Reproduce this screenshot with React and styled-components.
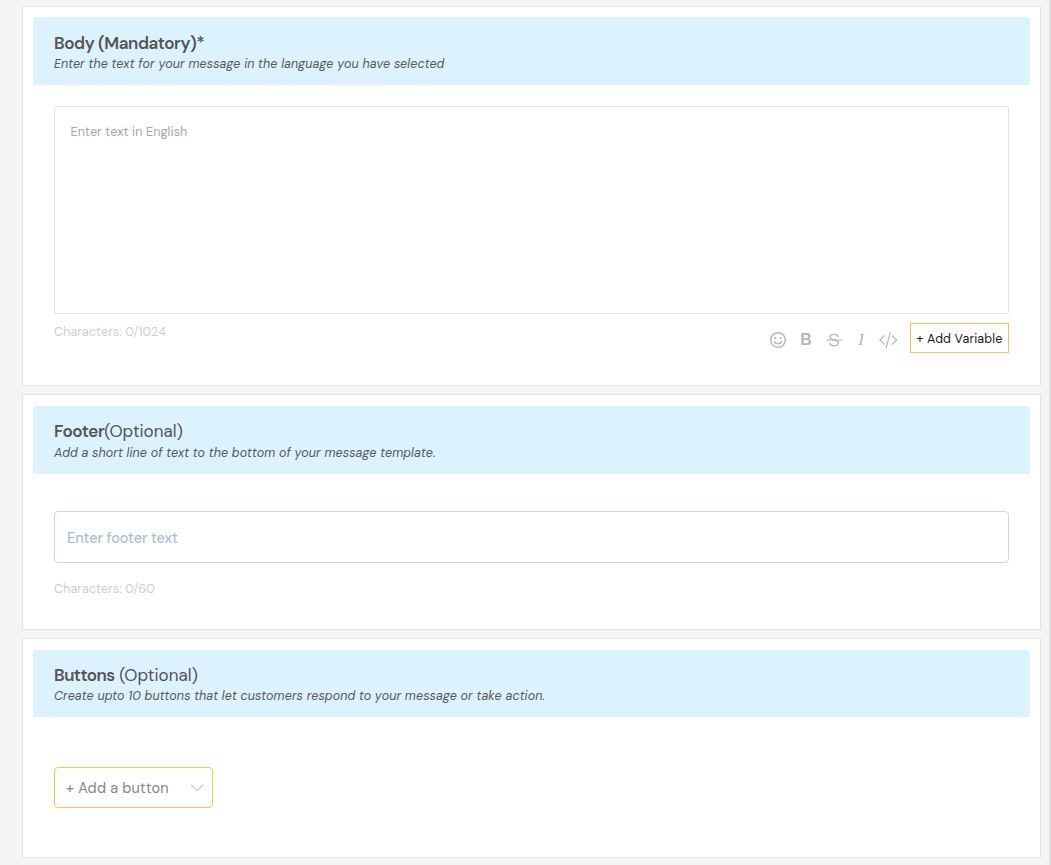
import styled, { createGlobalStyle } from "styled-components";

function App() {
  return (
    <>
      <GlobalStyle />
      <Page>
        <Card $height={380}>
          <CardHeader>
            <Title>
              <Strong $spacing={-0.42}>Body (Mandatory)*</Strong>
            </Title>
            <Subtitle>
              Enter the text for your message in the language you have selected
            </Subtitle>
          </CardHeader>
          <BodyContent>
            <TextArea placeholder="Enter text in English" />
            <BodyTools>
              <Counter>Characters: 0/1024</Counter>
              <Toolbar>
                <SmileIcon />
                <Glyph $bold>B</Glyph>
                <StrikeIcon />
                <Glyph>I</Glyph>
                <CodeIcon />
                <VariableButton>+ Add Variable</VariableButton>
              </Toolbar>
            </BodyTools>
          </BodyContent>
        </Card>

        <Card $height={236} $top={11}>
          <CardHeader $top={14}>
            <Title $gap={1}>
              <Strong $spacing={-0.45}>Footer</Strong>
              <span>(Optional)</span>
            </Title>
            <Subtitle>
              Add a short line of text to the bottom of your message template.
            </Subtitle>
          </CardHeader>
          <FooterContent>
            <FooterInput placeholder="Enter footer text" />
            <Counter>Characters: 0/60</Counter>
          </FooterContent>
        </Card>

        <Card $height={220} $top={11}>
          <CardHeader $height={67} $top={14}>
            <Title>
              <Strong $spacing={-0.55}>Buttons</Strong> <span>(Optional)</span>
            </Title>
            <Subtitle>
              Create upto 10 buttons that let customers respond to your message
              or take action.
            </Subtitle>
          </CardHeader>
          <ButtonsContent>
            <AddButton>
              <span>+ Add a button</span>
              <ChevronIcon />
            </AddButton>
          </ButtonsContent>
        </Card>
      </Page>
    </>
  );
}

export default App;

function SmileIcon() {
  return (
    <svg width="18" height="18" viewBox="0 0 18 18" fill="none">
      <circle cx="9" cy="9" r="7.3" stroke="#b5b8b9" strokeWidth="1.5" />
      <circle cx="6.3" cy="7.1" r="1.1" fill="#b5b8b9" />
      <circle cx="11.7" cy="7.1" r="1.1" fill="#b5b8b9" />
      <path
        d="M5.2 10.6c1.5 2.9 6.1 2.9 7.6 0"
        stroke="#b5b8b9"
        strokeWidth="1.4"
        strokeLinecap="round"
      />
    </svg>
  );
}

function StrikeIcon() {
  return (
    <svg width="18" height="18" viewBox="0 0 18 18" fill="none">
      <path d="M1 9h16" stroke="#b5b8b9" strokeWidth="1.1" />
      <path
        d="M13 6C12.800 4.300 11.300 3.400 9 3.400c-2.400 0-4 1-4 2.700C5 7.600 6.200 8.300 9 9c2.900.7 4.400 1.400 4.400 3 0 1.700-1.800 2.700-4.300 2.700-2.500 0-4.200-1-4.500-2.800"
        stroke="#b5b8b9"
        strokeWidth="1.4"
      />
    </svg>
  );
}

function CodeIcon() {
  return (
    <svg width="19" height="18" viewBox="0.500 0 19 18" fill="none">
      <path
        d="M6 4.500 1.400 9 6 13.500M13.500 4.500 18.100 9 13.500 13.500M11.900 1.200 7.600 16.800"
        stroke="#b5b8b9"
        strokeWidth="1.2"
      />
    </svg>
  );
}

function ChevronIcon() {
  return (
    <svg width="14" height="10" viewBox="0 0 14 10" fill="none">
      <path d="M1.200 2 7 7.800 12.800 2" stroke="#c8c8c8" strokeWidth="1.1" />
    </svg>
  );
}

const GlobalStyle = createGlobalStyle`
  * {
    box-sizing: border-box;
  }

  body {
    margin: 0;
    background-color: #f4f4f4;
    font-family: "DM Sans", Inter, sans-serif;
  }
`;
const Page = styled.main`
  display: flex;
  flex-direction: column;
  gap: 8px;
  height: 865px;
  padding: 6px 8px 0 22px;
  border-right: 2px solid #e2e2e2;
  overflow: hidden;
`;
const Card = styled.section`
  display: flex;
  flex-direction: column;
  flex-shrink: 0;
  height: ${({ $height }) => $height}px;
  padding: ${({ $top = 10 }) => $top}px 10px 10px;
  background-color: #fff;
  border: 1px solid #e2e2e2;
`;
const CardHeader = styled.header`
  flex-shrink: 0;
  height: ${({ $height = 68 }) => $height}px;
  padding: ${({ $top = 15 }) => $top}px 21px 0;
  background-color: #dcf2ff;
  border-radius: 3px 3px 0 0;
`;
const Title = styled.h2`
  margin: 0 0 ${({ $gap = 0 }) => $gap}px;
  font-size: 17px;
  line-height: 22px;
  font-weight: 400;
  color: #545454;
`;
const Strong = styled.span`
  font-weight: 600;
  letter-spacing: ${({ $spacing }) => $spacing}px;
`;
const Subtitle = styled.p`
  margin: 0;
  font-size: 12.5px;
  line-height: 20px;
  font-style: italic;
  letter-spacing: 0.09px;
  white-space: nowrap;
  color: #585858;
`;
const BodyContent = styled.div`
  padding: 21px 21px 0;
`;
const TextArea = styled.textarea`
  display: block;
  width: 100%;
  height: 208px;
  padding: 16px 15.5px;
  border: 1px solid #e2e2e2;
  border-radius: 2px;
  outline: none;
  resize: none;
  font-family: inherit;
  font-size: 12.5px;
  line-height: 18px;
  letter-spacing: 0.14px;

  &::placeholder {
    color: #a2a6b1;
  }
`;
const BodyTools = styled.div`
  display: flex;
  justify-content: space-between;
  padding-top: 9px;
`;
const Counter = styled.span`
  padding-top: 1px;
  font-size: 12.5px;
  line-height: 17px;
  letter-spacing: 0.12px;
  color: #cecece;
`;
const Toolbar = styled.div`
  display: flex;
  align-items: center;
  gap: 12px;
  height: 30px;

  svg {
    flex-shrink: 0;
    margin-top: 4px;
  }
`;
const Glyph = styled.span`
  width: ${({ $bold }) => ($bold ? 14 : 12)}px;
  margin-top: 4px;
  text-align: center;
  font-family: ${({ $bold }) =>
    $bold ? '"Liberation Sans", sans-serif' : '"Liberation Serif", serif'};
  font-size: ${({ $bold }) => ($bold ? 16 : 17)}px;
  line-height: 18px;
  font-weight: ${({ $bold }) => ($bold ? 700 : 400)};
  font-style: ${({ $bold }) => ($bold ? "normal" : "italic")};
  color: #b5b8b9;
`;
const VariableButton = styled.button`
  width: 99px;
  height: 30px;
  padding: 1px 0 0;
  background-color: #fff;
  border: 1px solid #ffc14d;
  font-family: inherit;
  font-size: 12.5px;
  letter-spacing: 0.16px;
  white-space: nowrap;
  color: #1a1a1a;
`;
const FooterContent = styled.div`
  display: flex;
  flex-direction: column;
  gap: 17px;
  padding: 37px 21px 0;
`;
const FooterInput = styled.input`
  width: 100%;
  height: 52px;
  padding: 2px 12px 0;
  border: 1px solid #cdd7e2;
  border-radius: 4px;
  outline: none;
  font-family: inherit;
  font-size: 14.5px;
  font-weight: 500;
  letter-spacing: -0.1px;

  &::placeholder {
    color: #aebccd;
  }
`;
const ButtonsContent = styled.div`
  padding: 50px 21px 0;
`;
const AddButton = styled.button`
  display: flex;
  align-items: center;
  justify-content: space-between;
  width: 159px;
  height: 41px;
  padding: 0 8px 0 11px;
  background-color: #fff;
  border: 1px solid #ffc14d;
  border-radius: 4px;
  font-family: inherit;
  font-size: 14.5px;
  letter-spacing: 0.18px;
  color: #858585;
`;
